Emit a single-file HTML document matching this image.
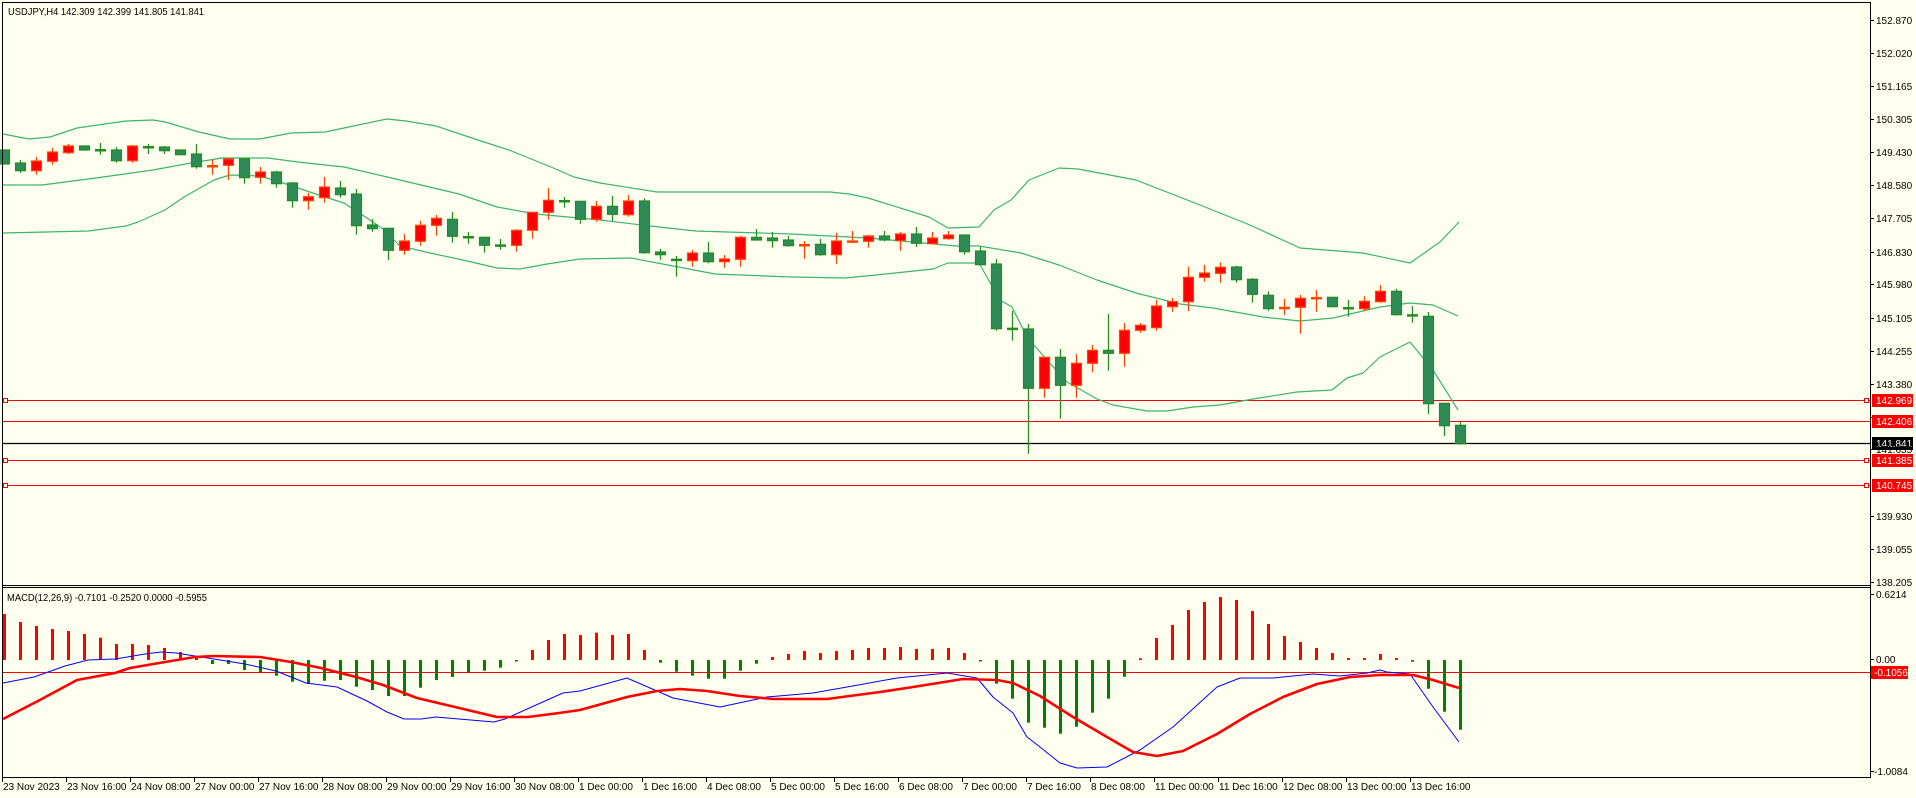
<!DOCTYPE html>
<html><head><meta charset="utf-8">
<style>
html,body{margin:0;padding:0;background:#FFFFF0;width:1916px;height:798px;overflow:hidden}
svg{display:block}
text{font-family:"Liberation Sans",sans-serif;font-size:10px;fill:#000}
</style></head>
<body>
<svg id="s" width="1916" height="798" viewBox="0 0 1916 798" xmlns="http://www.w3.org/2000/svg">
<rect x="0" y="0" width="1916" height="798" fill="#FFFFF0"/>
<g id="g"></g>
<!-- frame -->
<g stroke="#000" stroke-width="1" fill="none" shape-rendering="crispEdges">
<line x1="2.5" y1="2" x2="2.5" y2="778"/>
<line x1="2" y1="2.5" x2="1871" y2="2.5"/>
<line x1="1870.5" y1="2" x2="1870.5" y2="778"/>
<line x1="2" y1="585.5" x2="1871" y2="585.5"/>
<line x1="2" y1="587.5" x2="1871" y2="587.5"/>
<line x1="2" y1="777.5" x2="1871" y2="777.5"/>
</g>
<text x="8" y="15" textLength="196" lengthAdjust="spacingAndGlyphs">USDJPY,H4  142.309 142.399 141.805 141.841</text>
<text x="7" y="601" textLength="200" lengthAdjust="spacingAndGlyphs">MACD(12,26,9) -0.7101 -0.2520 0.0000 -0.5955</text>
<g id="ax"></g>
<!-- right labels static -->
<g>
<rect x="1872" y="394" width="41" height="13" fill="#FF0000"/><text x="1876" y="404" fill="#fff" style="fill:#fff">142.969</text>
<rect x="1872" y="415" width="41" height="13" fill="#FF0000"/><text x="1876" y="425" style="fill:#fff">142.406</text>
<rect x="1872" y="437" width="41" height="13" fill="#000"/><text x="1876" y="447" style="fill:#fff">141.841</text>
<rect x="1872" y="454" width="41" height="13" fill="#FF0000"/><text x="1876" y="464" style="fill:#fff">141.385</text>
<rect x="1872" y="479" width="41" height="13" fill="#FF0000"/><text x="1876" y="489" style="fill:#fff">140.745</text>
<text x="1876" y="598">0.6214</text>
<text x="1876" y="663">0.00</text>
<rect x="1871" y="666" width="37" height="13" fill="#FF0000"/><text x="1874" y="676" style="fill:#fff">-0.1056</text>
<text x="1874" y="775">-1.0084</text>
</g>
<g id="tl">
<text x="3" y="790">23 Nov 2023</text>
<text x="67" y="790">23 Nov 16:00</text>
<text x="131" y="790">24 Nov 08:00</text>
<text x="195" y="790">27 Nov 00:00</text>
<text x="259" y="790">27 Nov 16:00</text>
<text x="323" y="790">28 Nov 08:00</text>
<text x="387" y="790">29 Nov 00:00</text>
<text x="451" y="790">29 Nov 16:00</text>
<text x="515" y="790">30 Nov 08:00</text>
<text x="579" y="790">1 Dec 00:00</text>
<text x="643" y="790">1 Dec 16:00</text>
<text x="707" y="790">4 Dec 08:00</text>
<text x="771" y="790">5 Dec 00:00</text>
<text x="835" y="790">5 Dec 16:00</text>
<text x="899" y="790">6 Dec 08:00</text>
<text x="963" y="790">7 Dec 00:00</text>
<text x="1027" y="790">7 Dec 16:00</text>
<text x="1091" y="790">8 Dec 08:00</text>
<text x="1155" y="790">11 Dec 00:00</text>
<text x="1219" y="790">11 Dec 16:00</text>
<text x="1283" y="790">12 Dec 08:00</text>
<text x="1347" y="790">13 Dec 00:00</text>
<text x="1411" y="790">13 Dec 16:00</text>
</g>
<g id="pl">
<text x="1876" y="24">152.870</text>
<text x="1876" y="57">152.020</text>
<text x="1876" y="90">151.165</text>
<text x="1876" y="123">150.305</text>
<text x="1876" y="156">149.430</text>
<text x="1876" y="189">148.580</text>
<text x="1876" y="222">147.705</text>
<text x="1876" y="256">146.830</text>
<text x="1876" y="288">145.980</text>
<text x="1876" y="322">145.105</text>
<text x="1876" y="355">144.255</text>
<text x="1876" y="388">143.380</text>
<text x="1876" y="453">141.655</text>
<text x="1876" y="520">139.930</text>
<text x="1876" y="553">139.055</text>
<text x="1876" y="586">138.205</text>
</g>
</svg>
<script>
(function(){
var NS="http://www.w3.org/2000/svg",g=document.getElementById("g");
function el(t,a){var e=document.createElementNS(NS,t);for(var k in a)e.setAttribute(k,a[k]);g.appendChild(e);return e;}
function X(i){return 4+16*i;}
function pl(pts,c,w){el("polyline",{points:pts.map(function(p){return p[0]+","+p[1]}).join(" "),fill:"none",stroke:c,"stroke-width":w,"stroke-linejoin":"round"});}
// horizontal lines
[[400,1],[421,0],[460,1],[485,1]].forEach(function(h){
 el("line",{x1:3,y1:h[0]+.5,x2:1870,y2:h[0]+.5,stroke:"#FF0000","stroke-width":1});
 if(h[1]){el("rect",{x:1864.5,y:h[0]-1.5,width:4,height:4,fill:"#FFFFF0",stroke:"#FF0000","stroke-width":1});
 el("rect",{x:3.5,y:h[0]-1.5,width:4,height:4,fill:"#FFFFF0",stroke:"#FF0000","stroke-width":1});}
});
el("line",{x1:3,y1:443.5,x2:1870,y2:443.5,stroke:"#000","stroke-width":1.2});
el("line",{x1:3,y1:672.5,x2:1870,y2:672.5,stroke:"#FF0000","stroke-width":1});
// bands
var bc="#3CB371";
pl([[3,134],[29,139],[50,137],[77,128],[126,121],[153,120],[165,122],[199,132],[230,139],[260,139],[291,133],[325,132],[344,128],[387,119],[406,121],[436,126],[478,140],[509,150],[551,167],[574,177],[600,183],[657,192],[749,192],[830,192],[849,194],[868,198],[929,217],[948,228],[979,227],[994,210],[1011,200],[1029,180],[1059,168],[1078,169],[1136,180],[1200,205],[1250,225],[1300,248],[1363,253],[1410,263],[1440,242],[1459,222]],bc,1.2);
pl([[3,185],[42,185],[96,178],[153,170],[191,163],[222,158],[268,158],[298,162],[344,167],[383,176],[421,185],[459,194],[497,207],[536,214],[600,220],[650,226],[696,231],[791,234],[868,238],[956,246],[979,246],[1021,253],[1059,265],[1097,280],[1136,293],[1180,304],[1213,308],[1263,317],[1300,321],[1333,318],[1380,307],[1410,303],[1433,305],[1458,316]],bc,1.2);
pl([[3,233],[88,231],[126,226],[138,222],[165,210],[184,197],[214,180],[230,175],[260,176],[283,183],[325,197],[344,203],[367,218],[383,229],[400,246],[430,253],[463,260],[497,268],[520,269],[547,264],[580,259],[631,258],[715,274],[791,277],[845,278],[876,275],[933,269],[948,263],[979,263],[1000,300],[1012,307],[1027,337],[1047,360],[1067,382],[1097,399],[1113,405],[1147,411],[1167,411],[1193,407],[1220,405],[1253,399],[1297,392],[1332,390],[1347,378],[1363,373],[1380,357],[1410,342],[1433,370],[1458,410]],bc,1.2);
// candles [high, top, bot, low, color]
var C=[[149.3,150,164,164.7,"G"],[160,163,170.7,172.7,"G"],[157,161,170.7,174.7,"R"],[148,152,161.3,164.7,"R"],[144,146,152.7,154,"R"],[146,146,150,150.7,"G"],[143,149.3,150.7,154.7,"G"],[147,150,160.7,162.7,"G"],[145,146,160.7,162.7,"R"],[144,146,148,154,"G"],
[146,147,150.7,154,"G"],[150,150,154.7,154.7,"G"],[144,154,166.7,168.7,"G"],[159.7,165.3,166.7,174.7,"R"],[158,159,165.3,180,"R"],[158,159,177.7,183.7,"G"],[167,172,177.3,183.7,"R"],[170.7,172,183.7,187.7,"G"],[182,183,200.7,207.7,"G"],[193,196.7,200.7,209.7,"R"],
[177,187,197.7,202.7,"R"],[181,188,194.7,197.7,"G"],[189,194,225.7,234.7,"G"],[219,225,228.7,231.7,"G"],[228,228.3,250.3,260,"G"],[234,241,250.3,254.7,"R"],[221,225.3,241.3,245.7,"R"],[215,218.3,225.3,235.7,"R"],[212,219.3,236.3,242.7,"G"],[232,236.3,237.7,243.7,"G"],
[237.3,237.3,245.3,252.7,"G"],[239,245,245.7,249.7,"G"],[229.3,230.3,245.3,251.7,"R"],[212,212.3,230.3,238.7,"R"],[188,200.3,212.3,219.7,"R"],[197,200.3,201.7,207.7,"G"],[201,201.3,219.3,223.7,"G"],[201,206.3,219.3,221.7,"R"],[196,206.3,214.3,221,"G"],[195,201,214.7,216.7,"R"],
[198.3,201,252.7,253.7,"G"],[249,252,254.7,259.7,"G"],[256,259,260.3,276.7,"G"],[250,253,260.7,266.7,"R"],[242,253,261.7,263.3,"G"],[255,259,261.7,267.7,"R"],[236,237.3,259.3,266.7,"R"],[229,237.3,240,240.7,"G"],[232,238,240.7,247.7,"G"],[236,240,245.7,246.7,"G"],
[241,244.3,245.7,258.7,"R"],[239,244.3,254.7,255.7,"G"],[233,241,254.7,263.7,"R"],[231,240.7,242,242.7,"R"],[235,236,241.3,247.7,"R"],[231,236,240,241.3,"G"],[232,234,240.7,250.7,"R"],[227,234,243.3,247,"G"],[232,238,243.7,244.3,"R"],[231,235,238.7,239.7,"R"],
[235,235,251.7,254.7,"G"],[246.7,251,264.7,265.3,"G"],[259,264,328.7,330.7,"G"],[311,328,329.3,340.7,"G"],[324,329,388.3,453.7,"G"],[357,357.3,388.3,397.7,"R"],[349,357.3,385.3,418.7,"G"],[354,363.3,385.3,397.7,"R"],[345,350.3,363.3,372.3,"R"],[314,350.3,353.3,370.7,"G"],
[323,330.3,353.3,366.7,"R"],[323,325.3,330.3,332.7,"R"],[300,306,327.7,330.7,"R"],[298,301.7,306.7,311.7,"R"],[266.7,277.3,301.7,311,"R"],[265,273,277.3,281.7,"R"],[262.3,267.3,273.3,282.7,"R"],[265.7,267,279.7,282.7,"G"],[278,279.3,294.3,302.7,"G"],[291.3,295.3,308.7,310.7,"G"],
[299,307.3,308.3,315,"R"],[295,298.3,307.3,333.7,"R"],[290,297.3,298.7,311.7,"R"],[297,297.3,306.7,307,"G"],[300,307.3,308.7,316.7,"G"],[296.3,301.3,308.7,311,"R"],[285,291.3,301.7,302.7,"R"],[289,291.3,314.7,315.7,"G"],[306,314,316.3,322.7,"G"],[312,316.3,403.7,414,"G"],
[403,403.3,425.7,436,"G"],[421.7,425.3,443.7,444.7,"G"]];
C.forEach(function(c,i){
 var x=X(i),G=c[4]=="G",wc=G?"#228B22":"#FF4500",fc=G?"#2E8B57":"#FF0000";
 el("line",{x1:x+.5,y1:c[0],x2:x+.5,y2:c[3],stroke:wc,"stroke-width":1.3});
 var h=c[2]-c[1];
 if(h<2.5){el("rect",{x:x-5,y:(c[1]+c[2])/2-1,width:11,height:2.5,fill:wc});}
 else el("rect",{x:x-4.5,y:c[1],width:10,height:h,fill:fc,stroke:wc,"stroke-width":1.2});
});
// histogram
var H=[614,622,626,629,631,634,637.7,644,644,645,648,652,656.7,664,664,670,672,675.7,681.7,684,680.7,680,686.7,690,696,696,687.7,680,677,672,670.7,667.7,660.7,650,640,634,635,632.7,635,634,650,662.7,671.7,675.7,678.7,678.7,670.7,663.7,657,654,651,653,651,650,648,648,647,649,649,648,653,660.7,683.7,698.7,722.7,727.7,733.7,726.7,712.7,698.7,676.7,658.3,638,625,610,602,597,600,611,624,636,642,648,653,658,658,654,658,661.7,688.7,711.7,729.7];
H.forEach(function(y,i){var x=X(i),up=y<660;
 var t=up?y:660,b=up?660:y; if(b-t<1.5){t=up?658.5:660;b=t+1.5;}
 el("rect",{x:x-1,y:t,width:3,height:b-t,fill:up?"#FF0000":"#008000"});});
pl([[3,683],[34,677],[65,666],[88,660],[115,659],[145,654],[161,652],[176,653],[195,656],[214,659],[245,664],[276,671],[306,683],[337,687],[367,701],[387,712],[404,719],[421,719],[436,717],[459,719],[494,722],[505,719],[536,705],[563,693],[580,691],[627,678],[673,698],[720,707],[767,697],[813,693],[847,687],[897,678],[947,673],[977,678],[993,697],[1013,713],[1027,737],[1040,747],[1060,763],[1077,768],[1107,767],[1140,750],[1173,727],[1217,687],[1240,678],[1273,678],[1313,674],[1340,676],[1367,673],[1380,670],[1387,672],[1410,674],[1433,707],[1459,742]],"#0000FF",1);
pl([[3,719],[38,701],[77,680],[115,673],[130,668],[165,662],[195,657],[214,656],[260,657],[291,662],[321,668],[356,677],[383,685],[417,698],[455,707],[497,717],[528,717],[559,713],[580,710],[627,697],[657,691],[680,689],[707,691],[740,696],[773,699],[827,699],[880,692],[913,687],[963,679],[997,680],[1013,683],[1040,696],[1073,717],[1107,737],[1133,752],[1157,756],[1183,751],[1217,734],[1250,714],[1283,697],[1317,684],[1350,677],[1380,675],[1413,675],[1433,680],[1459,688]],"#FF0000",2.6);
// axis ticks
var ax=document.getElementById("ax");
function tk(x1,y1,x2,y2){var e=document.createElementNS(NS,"line");e.setAttribute("x1",x1);e.setAttribute("y1",y1);e.setAttribute("x2",x2);e.setAttribute("y2",y2);e.setAttribute("stroke","#000");ax.appendChild(e);}
[20,53,86,119,152,185,218,252,284,318,351,384,417,449,516,549,582].forEach(function(y){tk(1870,y+.5,1874,y+.5);});
[594,659,771].forEach(function(y){tk(1870,y+.5,1874,y+.5);});
for(var i=0;i<=88;i+=4){var x=X(i)-1.5;tk(x,778,x,782);}
})();
</script>
</body></html>
